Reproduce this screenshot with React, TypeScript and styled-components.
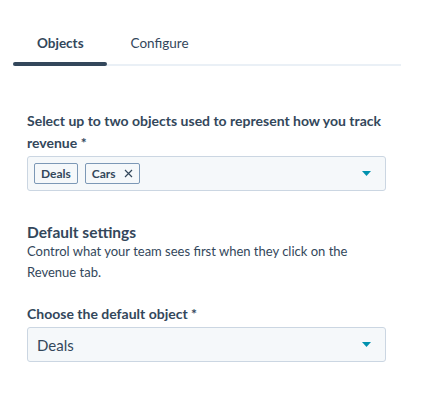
import React from "react";
import styled, { createGlobalStyle } from "styled-components";

const Global = createGlobalStyle`
  html, body { margin: 0; padding: 0; background: #fff; }
  body { font-family: "Lato", "Noto Sans", sans-serif; color: #33475b; }
`;

const Page = styled.div`
  width: 426px;
  height: 419px;
  padding-top: 29px;
  box-sizing: border-box;
`;

const TabList = styled.div`
  display: flex;
  margin-left: 13px;
  width: 388px;
  border-bottom: 2px solid #eaf0f6;
`;

const Tab = styled.div<{ $active?: boolean }>`
  position: relative;
  height: 35px;
  padding: 0 23px 0 24px;
  display: flex;
  align-items: flex-start;
  font-size: 13.5px;
  line-height: 28px;
  font-weight: ${(p) => (p.$active ? 700 : 400)};
  color: #33475b;
  &::after {
    content: "";
    display: ${(p) => (p.$active ? "block" : "none")};
    position: absolute;
    left: 0;
    right: 0;
    bottom: -2px;
    height: 4px;
    border-radius: 2px;
    background: #33475b;
  }
`;

const Content = styled.div`
  margin: 44px 0 0 27px;
  width: 359px;
  display: flex;
  flex-direction: column;
`;

const Label = styled.div`
  font-size: 14px;
  font-weight: 700;
  line-height: 22px;
  margin-bottom: 2px;
`;

const Field = styled.div<{ $mb?: number }>`
  box-sizing: border-box;
  height: 35px;
  background: #f5f8fa;
  border: 1px solid #cbd6e2;
  border-radius: 3px;
  display: flex;
  align-items: center;
  padding: 0 14px 0 6px;
  gap: 7px;
  margin-bottom: ${(p) => p.$mb ?? 0}px;
`;

const Tag = styled.div`
  box-sizing: border-box;
  height: 21px;
  border: 1px solid #7c98b6;
  background: #f5f8fa;
  border-radius: 2px;
  display: flex;
  align-items: center;
  gap: 8px;
  padding: 0 6px;
  font-size: 12px;
  font-weight: 700;
`;

const Remove = styled.span`
  display: flex;
  align-items: center;
`;

const Value = styled.div`
  font-size: 15px;
  padding-left: 3px;
`;

const Spacer = styled.div`
  flex: 1;
`;

const Heading = styled.div`
  font-size: 15.5px;
  font-weight: 700;
  line-height: 18px;
`;

const Desc = styled.div`
  font-size: 13px;
  line-height: 21px;
  margin-bottom: 20px;
`;

const Caret = () => (
  <svg width="9" height="5" viewBox="0 0 9 5">
    <path d="M0 0 H9 L4.5 5 Z" fill="#0091ae" />
  </svg>
);

const X = () => (
  <svg width="9" height="9" viewBox="0 0 9 9">
    <path d="M1 1 L8 8 M8 1 L1 8" stroke="#33475b" strokeWidth="1.2" />
  </svg>
);

export default function App() {
  return (
    <Page>
      <Global />
      <TabList>
        <Tab $active>Objects</Tab>
        <Tab>Configure</Tab>
      </TabList>
      <Content>
        <Label>Select up to two objects used to represent how you track revenue *</Label>
        <Field $mb={32}>
          <Tag>Deals</Tag>
          <Tag>
            Cars
            <Remove>
              <X />
            </Remove>
          </Tag>
          <Spacer />
          <Caret />
        </Field>
        <Heading>Default settings</Heading>
        <Desc>Control what your team sees first when they click on the Revenue tab.</Desc>
        <Label>Choose the default object *</Label>
        <Field>
          <Value>Deals</Value>
          <Spacer />
          <Caret />
        </Field>
      </Content>
    </Page>
  );
}
